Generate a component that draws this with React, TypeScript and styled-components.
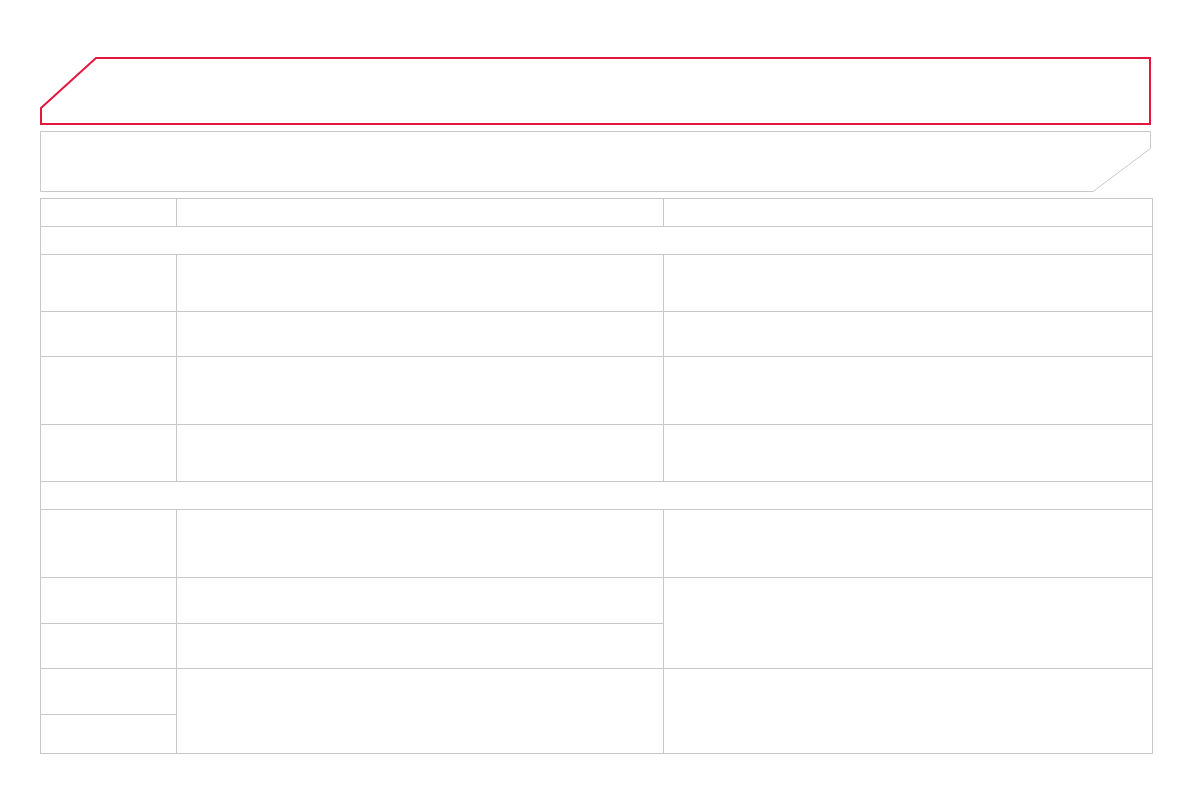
import React from 'react';
import styled, { createGlobalStyle } from 'styled-components';

const GlobalStyle = createGlobalStyle`
  body {
    margin: 0;
    background: #ffffff;
    font-family: 'Liberation Sans', Arial, sans-serif;
  }
`;

const Page = styled.div`
  width: 1191px;
  height: 794px;
  box-sizing: border-box;
  padding: 57px 0 0 40px;
  display: flex;
  flex-direction: column;
  gap: 6px;
`;

const Frame = styled.svg`
  display: block;
`;

const Grid = styled.table`
  width: 1112px;
  border-collapse: collapse;
  table-layout: fixed;
  border: 1px solid #c8c8c8;
`;

const Cell = styled.td`
  border: 1px solid #c8c8c8;
  padding: 0;
`;

const Row = styled.tr<{ h: number }>`
  height: ${p => p.h}px;
`;

const RED = '#e3173e';
const GREY = '#c8c8c8';

const TitleBar: React.FC = () => (
  <Frame width={1111} height={68} viewBox="0 0 1111 68">
    <polygon
      points="1,51 56,1 1110,1 1110,67 1,67"
      fill="none"
      stroke={RED}
      strokeWidth={2}
    />
  </Frame>
);

const SubBar: React.FC = () => (
  <Frame width={1112} height={61} viewBox="0 0 1112 61">
    <polygon
      points="0.5,0.5 1110.5,0.5 1110.5,17.5 1053,60.5 0.5,60.5"
      fill="none"
      stroke={GREY}
      strokeWidth={1}
    />
  </Frame>
);

const App: React.FC = () => {
  return (
    <>
      <GlobalStyle />
      <Page>
        <TitleBar />
        <SubBar />
        <Grid>
          <colgroup>
            <col style={{ width: 136 }} />
            <col style={{ width: 487 }} />
            <col style={{ width: 489 }} />
          </colgroup>
          <tbody>
            <Row h={28}>
              <Cell />
              <Cell />
              <Cell />
            </Row>
            <Row h={28}>
              <Cell colSpan={3} />
            </Row>
            <Row h={57}>
              <Cell />
              <Cell />
              <Cell />
            </Row>
            <Row h={45}>
              <Cell />
              <Cell />
              <Cell />
            </Row>
            <Row h={68}>
              <Cell />
              <Cell />
              <Cell />
            </Row>
            <Row h={57}>
              <Cell />
              <Cell />
              <Cell />
            </Row>
            <Row h={28}>
              <Cell colSpan={3} />
            </Row>
            <Row h={68}>
              <Cell />
              <Cell />
              <Cell />
            </Row>
            <Row h={46}>
              <Cell />
              <Cell />
              <Cell rowSpan={2} />
            </Row>
            <Row h={45}>
              <Cell />
              <Cell />
            </Row>
            <Row h={46}>
              <Cell />
              <Cell rowSpan={2} />
              <Cell rowSpan={2} />
            </Row>
            <Row h={39}>
              <Cell />
            </Row>
          </tbody>
        </Grid>
      </Page>
    </>
  );
};

export default App;
